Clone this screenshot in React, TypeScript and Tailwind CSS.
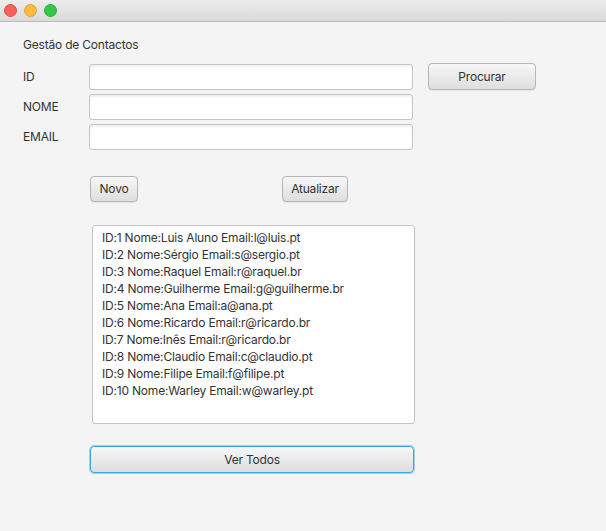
import React from 'react';

const contactos = [
	{ id: 1, nome: 'Luis Aluno', email: 'l@luis.pt' },
	{ id: 2, nome: 'Sérgio', email: 's@sergio.pt' },
	{ id: 3, nome: 'Raquel', email: 'r@raquel.br' },
	{ id: 4, nome: 'Guilherme', email: 'g@guilherme.br' },
	{ id: 5, nome: 'Ana', email: 'a@ana.pt' },
	{ id: 6, nome: 'Ricardo', email: 'r@ricardo.br' },
	{ id: 7, nome: 'Inês', email: 'r@ricardo.br' },
	{ id: 8, nome: 'Claudio', email: 'c@claudio.pt' },
	{ id: 9, nome: 'Filipe', email: 'f@filipe.pt' },
	{ id: 10, nome: 'Warley', email: 'w@warley.pt' },
];

const txt = 'text-[12px] tracking-[-0.2px] text-[#333]';

const btn = `rounded-[4px] border border-[#b5b5b5] bg-gradient-to-b from-[#f7f7f7] to-[#dedede] ${txt} shadow-[0_1px_0_rgba(0,0,0,0.06)] flex items-center justify-center`;

const field =
	'h-[26px] w-[324px] rounded-[3px] border border-[#c4c4c4] bg-white shadow-[inset_0_2px_2px_rgba(0,0,0,0.06)]';

const Field = ({ label }: { label: string }) => (
	<div className="flex items-center">
		<span className={`w-[66px] ${txt}`}>{label}</span>
		<div className={field} />
	</div>
);

export default function App() {
	return (
		<div
			className="w-[606px] h-[531px] bg-[#f4f4f4] flex flex-col"
			style={{ fontFamily: 'Inter, "Open Sans", sans-serif' }}
		>
			{/* title bar */}
			<div className="h-[22px] shrink-0 bg-gradient-to-b from-[#ededed] to-[#d9d9d9] border-b border-[#bdbdbd] flex items-center gap-[7px] pl-[4px]">
				<span className="w-[13px] h-[13px] rounded-full bg-[#fc605b] border border-[#e0483f]" />
				<span className="w-[13px] h-[13px] rounded-full bg-[#fdbc40] border border-[#dfa136]" />
				<span className="w-[13px] h-[13px] rounded-full bg-[#34c84a] border border-[#2aab37]" />
			</div>

			<div className="flex flex-col pl-[23px]">
				<div className={`mt-[15px] h-[16px] leading-[16px] ${txt}`}>Gestão de Contactos</div>

				<div className="mt-[10px] flex items-start">
					<div className="flex flex-col gap-[4px] pt-[1px]">
						<Field label="ID" />
						<Field label="NOME" />
						<Field label="EMAIL" />
					</div>
					<button className={`${btn} ml-[15px] w-[108px] h-[27px]`}>Procurar</button>
				</div>

				<div className="mt-[26px] flex ml-[67px]">
					<button className={`${btn} w-[48px] h-[26px]`}>Novo</button>
					<button className={`${btn} ml-[144px] w-[66px] h-[26px]`}>Atualizar</button>
				</div>

				<div className="mt-[23px] ml-[69px] w-[323px] h-[199px] rounded-[3px] border border-[#c4c4c4] bg-white pt-[3px] pl-[9px]">
					{contactos.map((c) => (
						<div key={c.id} className={`h-[17px] leading-[17px] whitespace-nowrap ${txt}`}>
							ID:{c.id} Nome:{c.nome} Email:{c.email}
						</div>
					))}
				</div>

				<button className={`${btn} mt-[22px] ml-[67px] w-[324px] h-[27px] !border-[#3aa6dd] ring-1 ring-[#9fd3ef]`}>
					Ver Todos
				</button>
			</div>
		</div>
	);
}
